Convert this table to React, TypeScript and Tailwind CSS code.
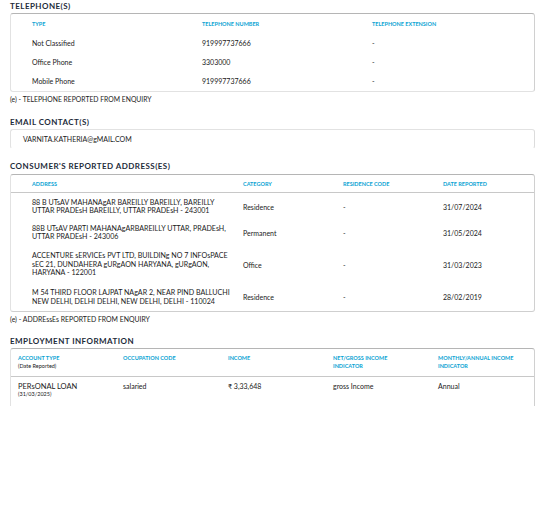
import React from "react";

const font = { fontFamily: "Lato, 'Open Sans', sans-serif" };

function Heading({ children, className = "" }: { children: React.ReactNode; className?: string }) {
  return (
    <div className={`text-[8px] font-bold tracking-[0.45px] text-[#1d2b3a] leading-[10px] ${className}`}>{children}</div>
  );
}

function Th({ children }: { children: React.ReactNode }) {
  return <div className="text-[5.5px] font-bold text-[#0aa3d3] leading-[8px] uppercase">{children}</div>;
}

const tel = [
  ["Not Classified", "919997737666", "-"],
  ["Office Phone", "3303000", "-"],
  ["Mobile Phone", "919997737666", "-"],
];

const addr = [
  [["88 B UTsAV MAHANAgAR BAREILLY BAREILLY, BAREILLY", "UTTAR PRADEsH BAREILLY, UTTAR PRADEsH - 243001"], "Residence", "-", "31/07/2024"],
  [["88B UTsAV PARTI MAHANAgARBAREILLY UTTAR, PRADEsH,", "UTTAR PRADEsH - 243006"], "Permanent", "-", "31/05/2024"],
  [["ACCENTURE sERVICEs PVT LTD, BUILDINg NO 7 INFOsPACE", "sEC 21, DUNDAHERA gURgAON HARYANA, gURgAON,", "HARYANA - 122001"], "Office", "-", "31/03/2023"],
  [["M 54 THIRD FLOOR LAJPAT NAgAR 2, NEAR PIND BALLUCHI", "NEW DELHI, DELHI DELHI, NEW DELHI, DELHI - 110024"], "Residence", "-", "28/02/2019"],
] as [string[], string, string, string][];

export default function App() {
  return (
    <div className="w-[542px] h-[510px] bg-white text-[#1a1a1a] pl-[10px] pr-[7px] pt-[1px]" style={font}>
      <Heading>TELEPHONE(S)</Heading>
      <div className="mt-[2px] rounded-[3px] border border-[#e2e2e2] border-t-[#b5b5b5] border-r-[#d0d0d0] pl-[21px] pt-[5px]">
        <div className="grid grid-cols-[170px_170px_1fr] h-[10px] items-center">
          <Th>TYPE</Th>
          <Th>TELEPHONE NUMBER</Th>
          <Th>TELEPHONE EXTENSION</Th>
        </div>
        <div className="mt-[5px]">
          {tel.map((r, i) => (
            <div key={i} className="grid grid-cols-[170px_170px_1fr] h-[19px] items-center text-[7px]">
              <div>{r[0]}</div>
              <div>{r[1]}</div>
              <div>{r[2]}</div>
            </div>
          ))}
        </div>
      </div>
      <div className="text-[6.8px] mt-[3px] leading-[8px]">(e) - TELEPHONE REPORTED FROM ENQUIRY</div>

      <Heading className="mt-[14px]">EMAIL CONTACT(S)</Heading>
      <div className="mt-[2px] h-[20px] rounded-[3px] border border-[#e2e2e2] border-b-transparent border-r-[#dcdcdc] pl-[12px] flex items-center text-[7px]">
        VARNITA.KATHERIA@gMAIL.COM
      </div>

      <Heading className="mt-[12px]">CONSUMER'S REPORTED ADDRESS(ES)</Heading>
      <div className="mt-[3px] rounded-[3px] border border-[#e2e2e2] border-t-[#b5b5b5] border-r-[#d0d0d0] border-b-[#cfcfcf]">
        <div className="grid grid-cols-[211px_100px_100px_1fr] pl-[21px] h-[18px] items-center border-b border-[#c8c8c8]">
          <Th>ADDRESS</Th>
          <Th>CATEGORY</Th>
          <Th>RESIDENCE CODE</Th>
          <Th>DATE REPORTED</Th>
        </div>
        <div className="pt-[1px]">
          {addr.map((r, i) => (
            <div key={i} className={`grid grid-cols-[211px_100px_100px_1fr] pl-[21px] items-center text-[7px] ${r[0].length === 3 ? "h-[38px]" : i === 3 ? "h-[27px]" : "h-[26px]"}`}>
              <div className="leading-[8.5px] text-[7.1px] whitespace-nowrap">
                {r[0].map((l, j) => (
                  <div key={j}>{l}</div>
                ))}
              </div>
              <div>{r[1]}</div>
              <div>{r[2]}</div>
              <div>{r[3]}</div>
            </div>
          ))}
        </div>
      </div>
      <div className="text-[6.9px] mt-[3px] leading-[8px]">(e) - ADDREssEs REPORTED FROM ENQUIRY</div>

      <Heading className="mt-[13px]">EMPLOYMENT INFORMATION</Heading>
      <div className="mt-[2px] rounded-t-[3px] border border-[#e2e2e2] border-t-[#b5b5b5] border-r-[#d0d0d0] border-b-0 h-[58px]">
        <div className="grid grid-cols-[105px_105px_105px_105px_1fr] pl-[7px] h-[28px] pt-[5px] border-b border-[#c8c8c8]">
          <div>
            <Th>ACCOUNT TYPE</Th>
            <div className="text-[5.5px] leading-[8px]">(Date Reported)</div>
          </div>
          <Th>OCCUPATION CODE</Th>
          <Th>INCOME</Th>
          <div className="text-[5.5px] font-bold text-[#0aa3d3] leading-[8px]">NET/GROSS INCOME<br />INDICATOR</div>
          <div className="text-[5.5px] font-bold text-[#0aa3d3] leading-[8px]">MONTHLY/ANNUAL INCOME<br />INDICATOR</div>
        </div>
        <div className="grid grid-cols-[105px_105px_105px_105px_1fr] pl-[7px] pt-[5px] text-[7px]">
          <div>
            <div className="leading-[9px] text-[7.5px]">PERsONAL LOAN</div>
            <div className="text-[5.5px] leading-[7px]">(31/03/2025)</div>
          </div>
          <div className="leading-[9px]">salaried</div>
          <div className="leading-[9px]">₹ 3,33,648</div>
          <div className="leading-[9px]">gross Income</div>
          <div className="leading-[9px]">Annual</div>
        </div>
      </div>
    </div>
  );
}
